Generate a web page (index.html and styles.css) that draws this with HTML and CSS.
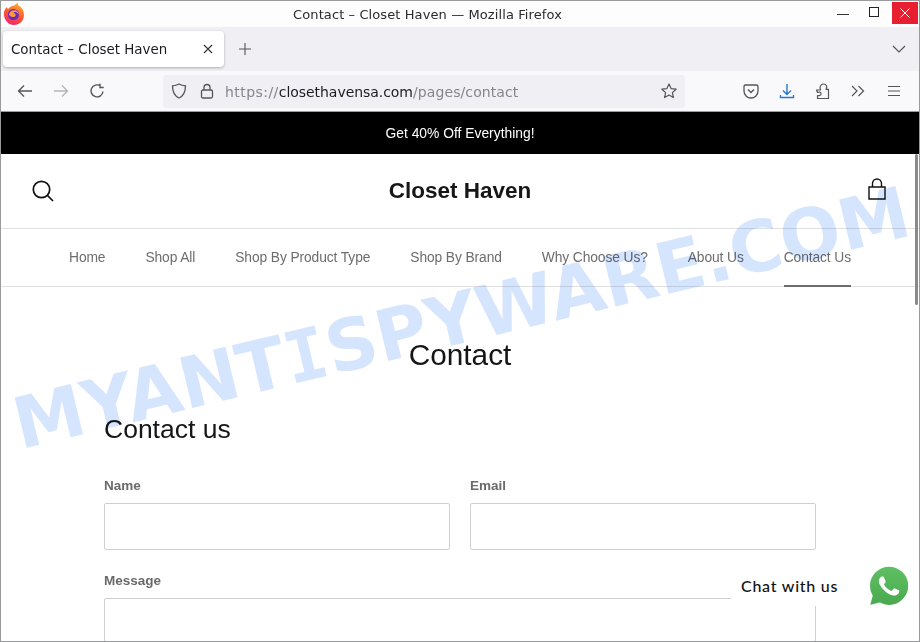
FILE: index.html
```html
<!DOCTYPE html>
<html lang="en">
<head>
<meta charset="utf-8">
<title>Contact – Closet Haven</title>
<link rel="stylesheet" href="styles.css">
</head>
<body>
<div class="window">
  <div class="titlebar">
    <svg class="fx-logo" viewBox="0 0 24 24" width="24" height="24">
      <defs>
        <linearGradient id="fxo" x1="0.7" y1="0" x2="0.3" y2="1"><stop offset="0" stop-color="#ffb32c"/><stop offset="0.5" stop-color="#ff5a2c"/><stop offset="1" stop-color="#f0246e"/></linearGradient>
      </defs>
      <path d="M2 10c.5-2 1.500-4 3-5 0 1 .5 1.800 1 2 1.500-2 3.500-3 6-3.200 1-.8 2.500-2 4-3-.3 1 0 2 .5 2.800 3.500 1.700 5.500 5.200 5.500 9.400 0 5.700-4.500 10-10 10S2 18 2 12.500c0-1 0-1.700 0-2.500z" fill="url(#fxo)"/>
      <circle cx="11.500" cy="12.500" r="5.500" fill="#6a2bb8"/>
      <path d="M7 12c1-3 4-4.500 7-3.500 1.800.6 3 2.500 2.800 4.500-.5-2-2-3-3.800-3-1 0-1.500.5-1.500 1 2 .3 2.500 1.500 2 2.800-.7 1.500-3 1.700-4.500.7C7.500 13.800 7 13 7 12z" fill="#ff9a3c"/>
    </svg>
    <span class="title-text">Contact – Closet Haven — Mozilla Firefox</span>
    <div class="win-controls">
      <svg class="win-ic win-min" viewBox="0 0 12 12" width="12" height="12"><path d="M0 7.500h12" stroke="#333" stroke-width="1" fill="none"/></svg>
      <svg class="win-ic win-max" viewBox="0 0 10 10" width="10" height="10"><rect x=".5" y=".5" width="9" height="9" stroke="#222" fill="none"/></svg>
      <div class="win-close"><svg viewBox="0 0 10 10" width="10" height="10"><path d="M.5.500l9 9M9.500.500l-9 9" stroke="#fff" stroke-width="1" fill="none"/></svg></div>
    </div>
  </div>

  <div class="tabstrip">
    <div class="tab">
      <span class="tab-label">Contact – Closet Haven</span>
      <svg viewBox="0 0 10 10" width="10" height="10"><path d="M1 1l8 8M9 1l-8 8" stroke="#333" stroke-width="1.100" fill="none"/></svg>
    </div>
    <svg class="newtab" viewBox="0 0 12 12" width="12" height="12"><path d="M6 0v12M0 6h12" stroke="#555" stroke-width="1.100" fill="none"/></svg>
    <svg class="tabs-menu" viewBox="0 0 14 8" width="14" height="8"><path d="M1 1l6 6 6-6" stroke="#555" stroke-width="1.200" fill="none"/></svg>
  </div>

  <div class="navbar">
    <div class="nav-buttons">
      <svg viewBox="0 0 16 14" width="16" height="14"><path d="M15 7H1.500M7 1.500L1.500 7 7 12.500" stroke="#555" stroke-width="1.300" fill="none"/></svg>
      <svg viewBox="0 0 16 14" width="16" height="14"><path d="M1 7h13.500M9 1.500L14.500 7 9 12.500" stroke="#b5b5b8" stroke-width="1.300" fill="none"/></svg>
      <svg viewBox="0 0 16 16" width="16" height="16"><path d="M14 8.500A6 6 0 1 1 11.500 3M11 .8V4.500h3.700" stroke="#555" stroke-width="1.400" fill="none"/></svg>
    </div>
    <div class="urlbar">
      <svg class="url-shield" viewBox="0 0 16 16" width="16" height="16"><path d="M8 1c2 1.200 4 1.700 6.500 1.800 0 5.500-1.500 10-6.500 12.200C3 12.800 1.500 8.300 1.500 2.800 4 2.700 6 2.200 8 1z" stroke="#555" stroke-width="1.300" fill="none"/></svg>
      <svg class="url-lock" viewBox="0 0 14 16" width="14" height="16"><rect x="1.500" y="7" width="11" height="8" rx="1.500" stroke="#555" stroke-width="1.300" fill="none"/><path d="M4 7V4.500a3 3 0 0 1 6 0V7" stroke="#555" stroke-width="1.300" fill="none"/></svg>
      <span class="url"><span class="url-dim url-scheme">https://</span><span class="url-host">closethavensa.com</span><span class="url-dim">/pages/contact</span></span>
      <svg class="url-star" viewBox="0 0 16 16" width="16" height="16"><path d="M8 1l2.100 4.600 5 .6-3.700 3.400 1 5L8 12.100l-4.400 2.500 1-5L.9 6.200l5-.6z" stroke="#555" stroke-width="1.200" stroke-linejoin="round" fill="none"/></svg>
    </div>
    <div class="tools">
      <svg viewBox="0 0 16 16" width="16" height="16"><path d="M2.500 2h11A1.500 1.500 0 0 1 15 3.500V8a7 7 0 0 1-14 0V3.500A1.500 1.500 0 0 1 2.500 2z" stroke="#555" stroke-width="1.300" fill="none"/><path d="M5 6.500L8 9.500 11 6.500" stroke="#555" stroke-width="1.400" fill="none"/></svg>
      <svg viewBox="0 0 16 16" width="16" height="16"><path d="M8 1v10M4 7.500L8 11.500 12 7.500M1.500 12v2.500h13V12" stroke="#2a78c8" stroke-width="1.400" fill="none"/></svg>
      <svg viewBox="0 0 16 16" width="16" height="16"><path d="M1.500 7H5.500C4.500 4 5.500 1 8.500 1S12.500 4 11 6.300H13.500V15.500H2.500V12.500C5 13 6 12 6 10.800S5 8.500 2.500 9.500z" stroke="#555" stroke-width="1.200" stroke-linejoin="round" fill="none"/></svg>
      <svg viewBox="0 0 14 12" width="14" height="12"><path d="M1 1l5 5-5 5M7.500 1l5 5-5 5" stroke="#555" stroke-width="1.200" fill="none"/></svg>
      <svg class="tool-menu" viewBox="0 0 14 12" width="14" height="12"><path d="M1 1.500h12M1 6h12M1 10.500h12" stroke="#555" stroke-width="1.200" fill="none"/></svg>
    </div>
  </div>

  <div class="page">
    <div class="announcement">Get 40% Off Everything!</div>
    <header class="site-header">
      <svg class="search-ic" viewBox="0 0 24 24" width="24" height="24"><circle cx="10.500" cy="10.500" r="8.200" stroke="#111" stroke-width="1.700" fill="none"/><path d="M16.500 16.500L22 22" stroke="#111" stroke-width="1.700" fill="none"/></svg>
      <div class="logo">Closet Haven</div>
      <svg class="bag-ic" viewBox="0 0 18 22" width="18" height="22"><path d="M1 9h16V21H1zM4.500 9V5.500a4.500 4.500 0 0 1 9 0V9" stroke="#111" stroke-width="1.400" fill="none"/></svg>
    </header>
    <nav class="site-nav">
      <a class="nav-item">Home</a>
      <a class="nav-item">Shop All</a>
      <a class="nav-item">Shop By Product Type</a>
      <a class="nav-item">Shop By Brand</a>
      <a class="nav-item">Why Choose Us?</a>
      <a class="nav-item">About Us</a>
      <a class="nav-item active">Contact Us</a>
    </nav>
    <main class="main">
      <h1 class="page-title">Contact</h1>
      <h2 class="form-title">Contact us</h2>
      <form class="form">
        <div class="field"><label class="label">Name</label><div class="input"></div></div>
        <div class="field"><label class="label">Email</label><div class="input"></div></div>
        <div class="field wide"><label class="label">Message</label><div class="textarea"></div></div>
      </form>
    </main>

    <div class="watermark">MYANT<span class="wm-i">I</span>SPYWARE.COM</div>
    <div class="scrollthumb"></div>
    <div class="chat">
      <span class="chat-label">Chat with us</span>
      <svg class="wa" viewBox="-1 -1 26 26" width="44" height="44">
        <defs><linearGradient id="wag" x1="0" y1="0" x2="0" y2="1"><stop offset="0" stop-color="#5fc163"/><stop offset="1" stop-color="#4aa84e"/></linearGradient></defs>
        <path d="M.057 24l1.688-6.163A11.870 11.870 0 0 1 .157 11.892C.16 5.335 5.495 0 12.050 0c3.180 0 6.165 1.240 8.413 3.488a11.820 11.820 0 0 1 3.480 8.413c-.003 6.558-5.339 11.893-11.893 11.893a11.880 11.880 0 0 1-5.688-1.448z" fill="url(#wag)" stroke="#fff" stroke-width="1.200"/>
        <path d="M17.472 14.382c-.297-.149-1.758-.867-2.030-.967-.273-.099-.471-.148-.670.150-.197.297-.767.966-.940 1.164-.173.199-.347.223-.644.075-.297-.150-1.255-.463-2.390-1.475-.883-.788-1.480-1.761-1.653-2.059-.173-.297-.018-.458.130-.606.134-.133.298-.347.446-.520.149-.174.198-.298.298-.497.099-.198.050-.371-.025-.520-.075-.149-.669-1.612-.916-2.207-.242-.579-.487-.500-.669-.510-.173-.008-.371-.010-.570-.010-.198 0-.520.074-.792.372-.272.297-1.040 1.016-1.040 2.479 0 1.462 1.065 2.875 1.213 3.074.149.198 2.096 3.200 5.077 4.487.709.306 1.262.489 1.694.625.712.227 1.360.195 1.871.118.571-.085 1.758-.719 2.006-1.413.248-.694.248-1.289.173-1.413-.074-.124-.272-.198-.570-.347z" fill="#fff"/>
      </svg>
    </div>
  </div>
</div>
</body>
</html>
```

FILE: styles.css
```css
* { box-sizing: border-box; }
html, body { margin: 0; padding: 0; background: #fff; }
body { width: 920px; height: 642px; overflow: hidden; }

.window {
  width: 920px;
  height: 642px;
  display: flex;
  flex-direction: column;
  border: 1px solid #999a9c;
  overflow: hidden;
  font-family: "DejaVu Sans", sans-serif;
}

.titlebar {
  height: 26px;
  flex: none;
  background: #fdfdfd;
  display: flex;
  align-items: center;
  justify-content: center;
  padding-right: 65px;
  position: relative;
}
.title-text { font-size: 13px; letter-spacing: .1px; color: #2b2b2b; margin-top: 1px; }
.fx-logo { position: absolute; left: 1px; top: 1px; }
.win-controls {
  position: absolute;
  right: 1px;
  top: 1px;
  display: flex;
  align-items: center;
}
.win-min { margin-right: 20px; }
.win-max { margin-right: 13px; margin-top: -3px; }
.win-close {
  width: 26px;
  height: 22px;
  background: #e81f30;
  display: flex;
  align-items: center;
  justify-content: center;
}

.tabstrip {
  height: 44px;
  flex: none;
  background: #f0f0f4;
  display: flex;
  align-items: center;
  padding-left: 2px;
}
.tab {
  width: 221px;
  height: 36px;
  background: #fff;
  border-radius: 4px;
  box-shadow: 0 1px 3px rgba(0,0,0,.28);
  display: flex;
  align-items: center;
  justify-content: space-between;
  padding: 0 11px 0 8px;
  font-size: 13.400px;
  color: #1c1b22;
}
.tab-label { padding-top: 1px; }
.newtab { margin-left: 15px; }
.tabs-menu { margin-left: auto; margin-right: 13px; }

.navbar {
  height: 41px;
  flex: none;
  background: #f9f9fb;
  border-bottom: 1px solid #9c9c9f;
  display: flex;
  align-items: center;
}
.nav-buttons {
  display: flex;
  align-items: center;
  gap: 20px;
  padding-left: 16px;
  width: 162px;
}
.urlbar {
  width: 522px;
  height: 33px;
  background: #f0f0f4;
  border-radius: 4px;
  display: flex;
  align-items: center;
  padding: 0 8px;
  font-size: 14px;
}
.url-lock { margin-left: 13px; }
.url { margin-left: 11px; flex: 1; padding-top: 1px; }
.url-dim { color: #85858c; letter-spacing: .1px; }
.url-scheme { letter-spacing: .45px; }
.url-host { color: #1c1b22; letter-spacing: -.05px; }
.tools {
  display: flex;
  align-items: center;
  gap: 20px;
  padding-left: 58px;
}
.tool-menu { margin-left: 2px; }

.page {
  flex: 1;
  position: relative;
  overflow: hidden;
  background: #fff;
  font-family: "Liberation Sans", Arial, sans-serif;
}

.announcement {
  height: 42px;
  background: #000;
  color: #fff;
  font-size: 13.850px;
  display: flex;
  align-items: center;
  justify-content: center;
}

.site-header {
  height: 75px;
  border-bottom: 1px solid #e1e1e1;
  display: flex;
  align-items: center;
  justify-content: space-between;
  padding: 0 33px 0 30px;
  position: relative;
}
.bag-ic { margin-bottom: 4px; }
.logo {
  position: absolute;
  left: 0;
  right: 0;
  text-align: center;
  font-size: 22.500px;
  font-weight: 700;
  color: #161616;
  line-height: 1;
  top: 26px;
}

.site-nav {
  height: 58px;
  border-bottom: 1px solid #e1e1e1;
  display: flex;
  justify-content: center;
  gap: 40px;
}
.nav-item {
  font-size: 13.800px;
  color: #6d6d6d;
  display: flex;
  align-items: center;
  height: 58px;
  padding-bottom: 2px;
  letter-spacing: -.1px;
}
.nav-item.active {
  border-bottom: 2px solid #6d6d6d;
  padding-bottom: 0;
}

.main { padding: 0 103px; }
.page-title {
  margin: 50px 0 0;
  text-align: center;
  font-weight: 400;
  font-size: 29.800px;
  line-height: 36px;
  color: #161616;
}
.form-title {
  margin: 40px 0 0;
  font-weight: 400;
  font-size: 26.500px;
  line-height: 32px;
  color: #161616;
}
.form {
  margin-top: 32px;
  display: grid;
  grid-template-columns: 346px 346px;
  column-gap: 20px;
  row-gap: 22px;
}
.field { display: flex; flex-direction: column; }
.field.wide { grid-column: 1 / 3; }
.label {
  font-size: 13.500px;
  font-weight: 700;
  color: #6a6a6a;
  line-height: 18px;
  margin-bottom: 8px;
}
.input, .textarea {
  border: 1px solid #cfcfcf;
  border-radius: 2px;
  background: #fff;
}
.input { height: 47px; }
.textarea { height: 120px; }

.watermark {
  position: absolute;
  left: 22px;
  top: 277px;
  font-family: "DejaVu Sans", sans-serif;
  font-weight: 700;
  font-size: 71px;
  line-height: 1;
  color: #d6e5fe;
  mix-blend-mode: multiply;
  white-space: nowrap;
  transform: rotate(-13.500deg);
  transform-origin: left bottom;
  pointer-events: none;
}
.wm-i { font-family: "DejaVu Sans Mono", monospace; }

.scrollthumb {
  position: absolute;
  right: 1px;
  top: 42px;
  width: 3px;
  height: 151px;
  background: #8a8a8a;
  border-radius: 2px;
}

.chat {
  position: absolute;
  right: 8px;
  bottom: 33px;
  display: flex;
  align-items: center;
}
.chat-label {
  background: #fff;
  width: 133px;
  height: 40px;
  padding: 0 0 2px 10px;
  display: flex;
  align-items: center;
  font-family: "Lato", sans-serif;
  font-weight: 500;
  font-size: 16px;
  letter-spacing: .75px;
  color: #111;
  border-radius: 8px;
}
.wa { margin-left: 3px; display: block; }
```
